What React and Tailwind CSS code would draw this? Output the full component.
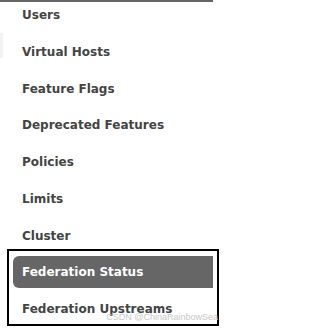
import React from "react";

const items = [
  "Users",
  "Virtual Hosts",
  "Feature Flags",
  "Deprecated Features",
  "Policies",
  "Limits",
  "Cluster",
  "Federation Status",
  "Federation Upstreams",
];

export default function App() {
  return (
    <div
      className="relative w-[220px] h-[328px] overflow-hidden bg-white"
      style={{ fontFamily: '"DejaVu Sans", Verdana, sans-serif' }}
    >
      <div className="h-[2px] w-[213px] bg-[#666]" />
      <div className="absolute left-0 top-[33px] h-[25px] w-[3px] bg-[#f3f3f3]" />
      <ul className="mt-[-3px] flex flex-col gap-[4.75px]">
        {items.map((label) => {
          const active = label === "Federation Status";
          return (
            <li
              key={label}
              className={`ml-[13px] flex h-8 w-[200px] items-center pl-[9px] text-[12px] font-bold ${
                active ? "rounded-l-md bg-[#666] text-white" : "text-[#444]"
              }`}
            >
              {label}
            </li>
          );
        })}
      </ul>
      <div className="pointer-events-none absolute left-[7px] top-[249px] h-[77px] w-[212px] border-2 border-black" />
      <div
        className="pointer-events-none absolute right-[2px] top-[311px] text-[9px] text-[#c8c8c8]"
        style={{ fontFamily: '"Liberation Sans", Arial, sans-serif' }}
      >
        CSDN @ChinaRainbowSea
      </div>
    </div>
  );
}
